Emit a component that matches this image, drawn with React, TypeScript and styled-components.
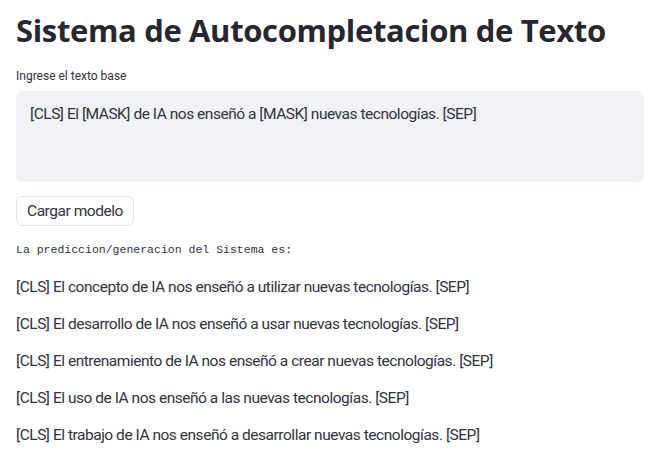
import styled, { createGlobalStyle } from "styled-components";

const GlobalStyle = createGlobalStyle`
  html, body {
    margin: 0;
    padding: 0;
    background: #ffffff;
  }
  body {
    font-family: Roboto, "Liberation Sans", sans-serif;
    color: #31333f;
  }
`;

const Page = styled.div`
  width: 656px;
  height: 460px;
  overflow: hidden;
  padding: 0 12px 0 16px;
  box-sizing: border-box;
  display: flex;
  flex-direction: column;
`;

const Title = styled.h1`
  margin: 8px 0 0 0;
  font-family: "Open Sans", Roboto, sans-serif;
  font-size: 31px;
  line-height: 44px;
  font-weight: 700;
  letter-spacing: -0.35px;
  color: #262730;
  white-space: nowrap;
`;

const Label = styled.label`
  margin-top: 16px;
  font-size: 12px;
  line-height: 16px;
  color: #31333f;
`;

const TextArea = styled.div`
  margin-top: 7px;
  height: 91px;
  background: #f0f2f6;
  border-radius: 7px;
  padding: 13px 14px;
  box-sizing: border-box;
  font-size: 15.5px;
  letter-spacing: -0.47px;
  line-height: 20px;
  color: #31333f;
`;

const Button = styled.button`
  align-self: flex-start;
  margin-top: 14px;
  height: 30px;
  padding: 0 10px;
  background: #ffffff;
  border: 1px solid #e3e5ea;
  border-radius: 6px;
  font-family: inherit;
  font-size: 15.5px;
  letter-spacing: -0.45px;
  color: #31333f;
`;

const MonoLine = styled.div`
  margin-top: 16px;
  font-family: "Liberation Mono", "DejaVu Sans Mono", monospace;
  font-size: 11.5px;
  line-height: 16px;
  color: #31333f;
`;

const Results = styled.div`
  margin-top: 18px;
  display: flex;
  flex-direction: column;
  gap: 15px;
`;

const Result = styled.p`
  margin: 0;
  font-size: 15.5px;
  letter-spacing: -0.47px;
  line-height: 22px;
  color: #31333f;
`;

const predictions = [
  "[CLS] El concepto de IA nos enseñó a utilizar nuevas tecnologías. [SEP]",
  "[CLS] El desarrollo de IA nos enseñó a usar nuevas tecnologías. [SEP]",
  "[CLS] El entrenamiento de IA nos enseñó a crear nuevas tecnologías. [SEP]",
  "[CLS] El uso de IA nos enseñó a las nuevas tecnologías. [SEP]",
  "[CLS] El trabajo de IA nos enseñó a desarrollar nuevas tecnologías. [SEP]",
];

export default function App() {
  return (
    <>
      <GlobalStyle />
      <Page>
        <Title>Sistema de Autocompletacion de Texto</Title>
        <Label>Ingrese el texto base</Label>
        <TextArea>[CLS] El [MASK] de IA nos enseñó a [MASK] nuevas tecnologías. [SEP]</TextArea>
        <Button>Cargar modelo</Button>
        <MonoLine>La prediccion/generacion del Sistema es:</MonoLine>
        <Results>
          {predictions.map((p) => (
            <Result key={p}>{p}</Result>
          ))}
        </Results>
      </Page>
    </>
  );
}
